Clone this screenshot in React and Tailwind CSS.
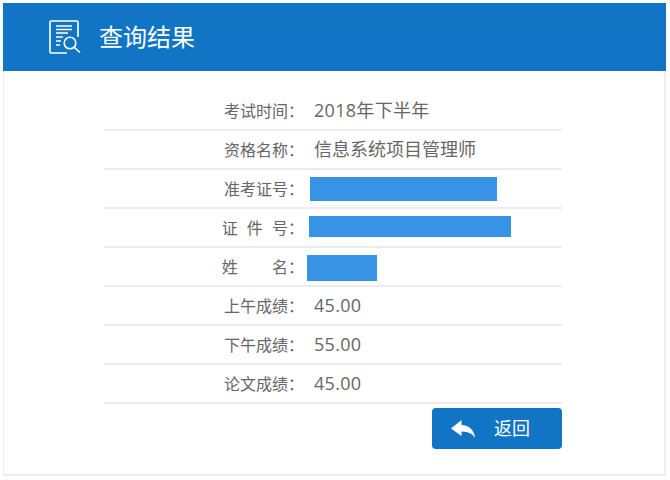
const rows = [
  { label: '考试时间\uFF1A', value: '2018年下半年', tight: 'tracking-[0.3px]' },
  { label: '资格名称\uFF1A', value: '信息系统项目管理师' },
  { label: '准考证号\uFF1A', bar: 'ml-[6px] h-[24px] w-[187px]' },
  { label: '证 件 号\uFF1A', bar: 'ml-[5px] mb-[2px] h-[21px] w-[202px]', spacing: '[word-spacing:5px]' },
  { label: '姓 名\uFF1A', bar: 'ml-[3px] mt-[2px] h-[26px] w-[70px]', spacing: '[word-spacing:30px]' },
  { label: '上午成绩\uFF1A', value: '45.00', tight: 'tracking-[0.3px]' },
  { label: '下午成绩\uFF1A', value: '55.00', tight: 'tracking-[0.3px]' },
  { label: '论文成绩\uFF1A', value: '45.00', tight: 'tracking-[0.3px]' },
];

function ReportIcon() {
  return (
    <svg width="34" height="36" viewBox="0 0 34 36" fill="none" stroke="white" strokeWidth="1.6" className="shrink-0">
      <path d="M30 18V3a1 1 0 0 0-1-1H3a1 1 0 0 0-1 1v30a1 1 0 0 0 1 1h16" />
      <path d="M8 7h16M8 10.500h16M8 14h12M8 18h7M8 22h5M8 26h4" strokeWidth="1.3" />
      <circle cx="22" cy="24" r="5.8" />
      <path d="M26.300 28.300l5.700 5.200" />
    </svg>
  );
}

function BackIcon() {
  return (
    <svg width="24" height="18" viewBox="0 0 24 18" fill="white" className="shrink-0">
      <path d="M0 8.500L10.500 0v5c7.500.3 12.500 4.500 13.500 13-2.800-4.500-6.500-6.300-13.500-6.500V16z" />
    </svg>
  );
}

export default function App() {
  return (
    <div className="w-[670px] h-[480px] bg-white pt-[3px] pl-[3px] font-['Open_Sans','Noto_Sans_CJK_SC',sans-serif] overflow-hidden">
      <div className="w-[663px] h-[473px] bg-white border-2 border-[#eeeeee] border-t-0 border-l">
        {/* header */}
        <div className="h-[68px] -ml-px -mr-[2px] bg-[#1174c4] flex items-center pl-[45px] gap-[17px] text-white text-[24px]">
          <ReportIcon />
          <span>查询结果</span>
        </div>

        {/* result rows */}
        <div className="w-[458px] ml-[100px] mt-[21px]">
          {rows.map(row => (
            <div key={row.label} className="h-[39px] flex items-center border-b-2 border-[#ececec] text-[#666666]">
              <div className={`w-[200px] shrink-0 text-right text-[16px] whitespace-pre ${row.spacing || ''}`}>{row.label}</div>
              {row.value ? (
                <div className={`ml-[10px] text-[18px] ${row.tight || ''}`}>{row.value}</div>
              ) : (
                <div className={`bg-[#3893e6] ${row.bar}`} />
              )}
            </div>
          ))}
          <div className="flex justify-end mt-[4px]">
            <button className="w-[130px] h-[41px] rounded bg-[#1174c4] flex items-center pl-[19px] text-white text-[18px]">
              <BackIcon />
              <span className="ml-[19px]">返回</span>
            </button>
          </div>
        </div>
      </div>
    </div>
  );
}
